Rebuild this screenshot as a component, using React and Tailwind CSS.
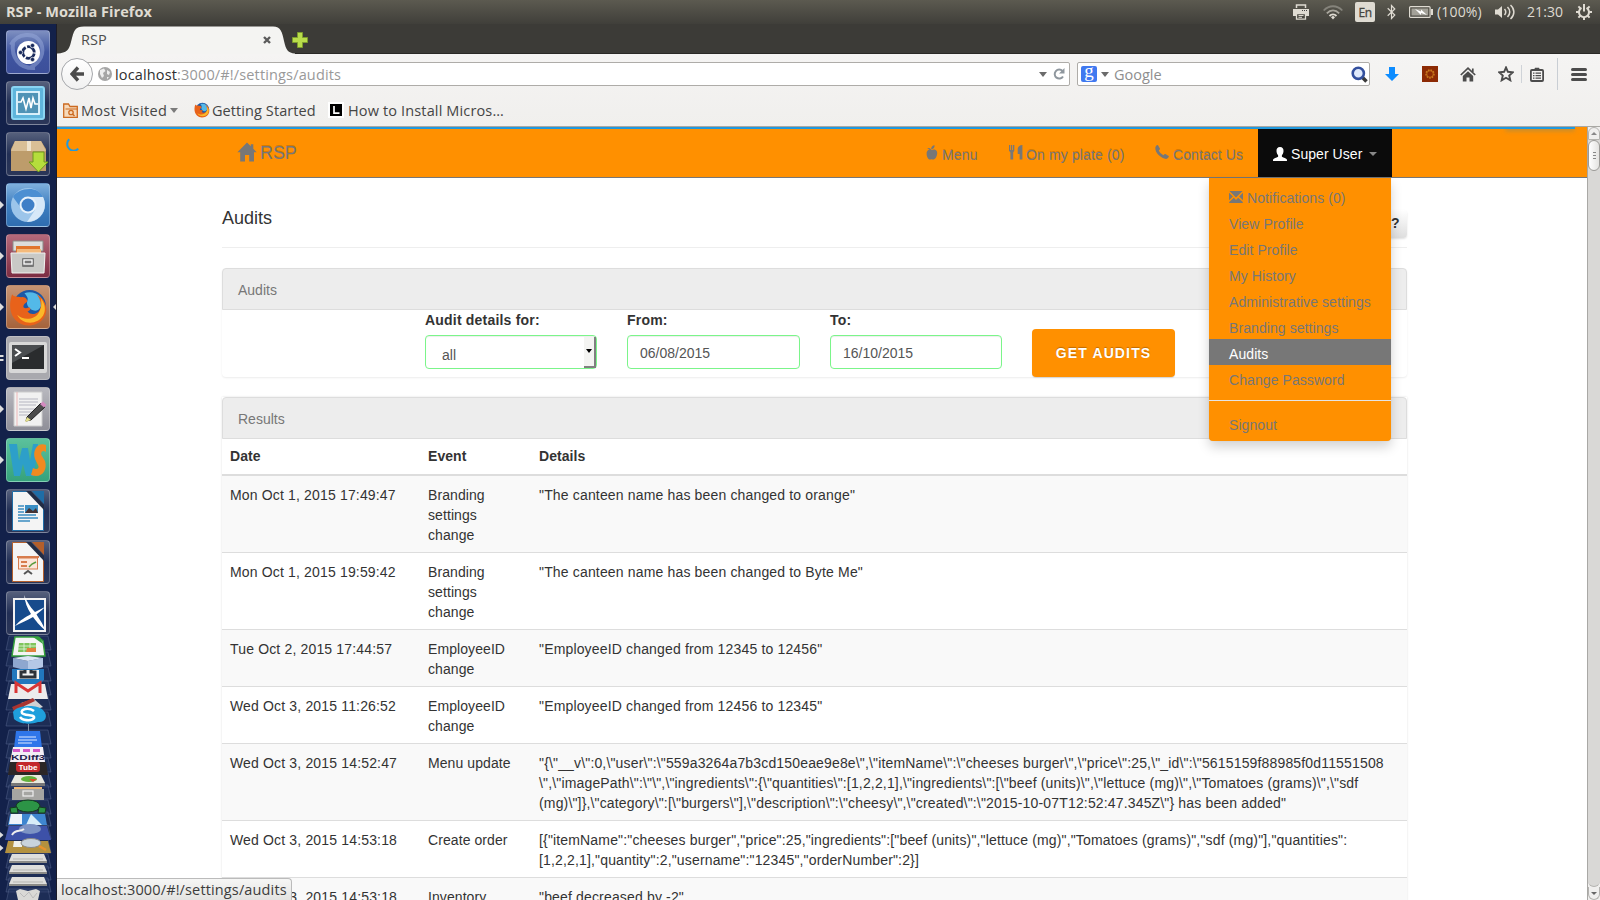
import React from "react";

const page = "font-['Liberation_Sans',Arial,sans-serif]";
const chrome = "font-['Open_Sans','Noto_Sans',sans-serif]";

/* ---------- page glyphs ---------- */
const HomeGlyph = () => (
  <svg width="20" height="20" viewBox="0 0 20 20" fill="#777"><path d="M10 .4 13.800 4.200V2.200H16.300V6.700L19.700 10.200H17V19.400H12.200V13H8V19.400H3.200V10.200H.4Z" /></svg>
);
const AppleGlyph = () => (
  <svg width="12" height="15" viewBox="0 0 12 15" fill="#777"><path d="M5.200 4.200C5 1.800 6.400.4 8.600.2 8.800 2.300 7.500 3.800 5.800 4.300ZM1.200 3.100C2.800 2.800 4.600 3.200 5.300 4.900 6.200 4.700 7 4.300 8.400 4.400 10.600 4.600 11.400 6.500 11.200 8.600 11 11.300 9.400 14.400 7.600 14.500 6.900 14.500 6.500 14.200 5.700 14.200 4.900 14.200 4.600 14.500 3.900 14.500 2.100 14.300.7 11.500.6 8.900.5 6.600 1.500 4.800 3.500 4.500 2.500 4.100 1.700 3.800 1.200 3.100Z" /></svg>
);
const CutleryGlyph = () => (
  <svg width="14" height="15" viewBox="0 0 14 15" fill="#777"><path d="M0 0H1.200V5H2V0H3.200V5H4V0H5.300V5.800L4.200 7.400V14.600H1.400V7.400L0 5.800ZM13.400 0V14.600H10.600V9H8.700V4C8.700 1.600 10.800.2 13.400 0Z" /></svg>
);
const PhoneGlyph = () => (
  <svg width="14" height="14" viewBox="0 0 14 14" fill="#777"><path d="M.4 2.200C.7 1.200 1.600.3 2.400.1 2.900 0 3.100.3 3.300.7L4.900 3.600C5.100 4 5 4.300 4.700 4.600L3.800 5.500C4.700 7.400 6.500 9.200 8.500 10.200L9.400 9.300C9.700 9 10 8.900 10.400 9.100L13.300 10.700C13.800 11 14 11.300 13.800 11.800 13.300 13 12.200 13.900 11 13.900 6 13.400-.6 7.500.4 2.200Z" /></svg>
);
const UserGlyph = () => (
  <svg width="14" height="14" viewBox="0 0 14 14" fill="#fff"><path d="M7 0C9.500 0 10.700 1.700 10.500 4.200 10.400 6 9.600 7.500 8.900 8.300V9.700C10.800 10.700 13.300 11.300 13.800 12.300 14 12.900 14 13.600 14 14H0C0 13.600 0 12.900.2 12.300.7 11.300 3.200 10.700 5.100 9.700V8.300C4.400 7.500 3.600 6 3.500 4.200 3.300 1.700 4.500 0 7 0Z" /></svg>
);
const MailGlyph = () => (
  <svg className="-mt-px" width="14" height="12" viewBox="0 0 14 12" fill="#777"><path d="M.4 0H13.600L7 6.400ZM0 1.700 3.900 5.600 0 9.300ZM14 1.700V9.300L10.100 5.600ZM4.800 6.700 7 8.900 9.200 6.700 13.800 11 13.800 12H.2V11Z" /></svg>
);
const Tri = ({ c = "#777" }) => (
  <svg className="block" width="8" height="5" viewBox="0 0 8 5"><path d="M0 0H8L4 5Z" fill={c} /></svg>
);

/* ---------- launcher ---------- */
const Firefox = ({ s }) => (
  <svg width={s} height={s} viewBox="0 0 38 38">
    <circle cx="20" cy="18" r="16" fill="#1d57a5" />
    <path d="M15 5C20 3 27 4 31 9 33 14 32 20 27 22 20 23 16 16 18 12 19 10 17 7 15 5Z" fill="#53b9e8" />
    <path d="M3 6C5 9 8 8 12 9 16 8 18 12 18 13 16 15 14 16 14 18 14 20 17 20 19 19 22 19 21 22 18 23 22 28 31 25 31 17 31 12 29 9 27 6 36 11 39 21 34 29 28 38 14 39 7 32 0 25 0 15 3 6Z" fill="#e8621a" />
    <path d="M31 10C38 19 35 28 28 32 20 36 11 33 8 26 14 32 25 31 29 24 32 19 32 14 31 10Z" fill="#fbb829" />
  </svg>
);

const Tile = ({ bg, left, right, two, children }) => (
  <div className="relative w-[57px] h-11 shrink-0 flex justify-center pr-px">
    <div className={`w-11 h-11 rounded-[4px] border border-white/25 overflow-hidden flex items-center justify-center ${bg}`}>{children}</div>
    {left && <svg className="absolute left-0 top-[18px]" width="4" height="8"><path d="M0 0 4 4 0 8Z" fill="#ddd" /></svg>}
    {two && <svg className="absolute left-0 top-[18px]" width="4" height="8"><path d="M0 1H3.500V3H0ZM0 5H3.500V7H0Z" fill="#ddd" /></svg>}
    {right && <svg className="absolute right-0 top-[18px]" width="4" height="8"><path d="M4 0 0 4 4 8Z" fill="#ddd" /></svg>}
  </div>
);
const dark = "bg-linear-to-b from-[#56607c] via-[#222f55] to-[#2b3658]";

const Doc = ({ c, children }) => (
  <svg width="42" height="42" viewBox="0 0 42 42">
    <path d="M5.500 1.500H22L36.500 17V40.500H5.500Z" fill="#f4f4f4" stroke={c} />
    <path d="M25 1H37V14Z" fill={c} /><path d="M19 1H24L37 15V20Z" fill="#222c44" />
    {children}
  </svg>
);

const tray = (y) => (
  <g key={y}>
    <path d={`M12 ${y}H44L47 ${y + 7}H9Z`} fill="#dededc" />
    <path d={`M9 ${y + 7}H47V${y + 9}H9Z`} fill="#8b8b88" />
    <path d={`M13 ${y + 5}H43`} stroke="#b5b5b2" />
  </g>
);

const Launcher = () => (
  <aside className="w-[57px] h-[876px] shrink-0 overflow-hidden bg-[#13214a] border-r border-[#1c1c28] pt-1.5 flex flex-col gap-[7px]">
    <Tile bg="bg-linear-to-b from-[#7e8fc0] via-[#4055a0] to-[#3c4f9a]">
      <svg width="42" height="42" viewBox="0 0 42 42">
        <g fill="none" stroke="#9aabdc" strokeWidth="4" opacity=".5"><path d="M4 14C10 2 28 0 34 12 38 22 33 32 24 36" /><path d="M6 12C4 26 12 38 28 37" /></g>
        <circle cx="21.500" cy="21.500" r="11.500" fill="#fff" />
        <circle cx="21.500" cy="21.500" r="5.800" fill="none" stroke="#1c2d5e" strokeWidth="2.800" strokeDasharray="10.600 1.500" strokeDashoffset="-1" />
        <g fill="#1c2d5e" stroke="#fff" strokeWidth=".7"><circle cx="13.500" cy="21.500" r="2.200" /><circle cx="25.500" cy="14.500" r="2.200" /><circle cx="25.500" cy="28.500" r="2.200" /></g>
      </svg>
    </Tile>
    <Tile bg={dark}>
      <svg width="34" height="34" viewBox="0 0 34 34"><rect x="1" y="1" width="32" height="32" rx="2" fill="#5fb5dc" stroke="#8ad4f2" strokeWidth="2" /><rect x="6" y="6" width="22" height="22" fill="#4f93b6" stroke="#e6f8ff" strokeWidth="1.800" /><path d="M7 16H10L12 12 15 23 18 12 20 22 22 12 24 18H27" fill="none" stroke="#fff" strokeWidth="1.600" /></svg>
    </Tile>
    <Tile bg={dark}>
      <svg width="42" height="42" viewBox="0 0 42 42"><path d="M8 8H34L39 16V38H4V16Z" fill="#bd9c6b" /><path d="M8 8H34L39 18H4Z" fill="#d9bf96" /><path d="M20 8H24V18H20Z" fill="#efe3cd" /><path d="M26 19H37V29H41L31.500 39 22 29H26Z" fill="#b5dd3c" stroke="#6f9a1d" /></svg>
    </Tile>
    <Tile left bg="bg-linear-to-b from-[#7fb0dd] via-[#3f7fc0] to-[#2f6db0]">
      <svg width="38" height="38" viewBox="0 0 38 38"><circle cx="19" cy="19" r="17" fill="#9cc5ea" /><path d="M4 11C8 3 28-2 34 11H19C12 12 11 17 12 22Z" fill="#4c8fd2" /><path d="M19 11H34C40 23 31 36 18 36L26 24Z" fill="#d7e8f8" /><circle cx="19" cy="19" r="8.500" fill="#e8f2fb" /><circle cx="19" cy="19" r="6.500" fill="#3f7fc7" /></svg>
    </Tile>
    <Tile left bg="bg-linear-to-b from-[#b5697b] to-[#7c2c42]">
      <svg width="38" height="38" viewBox="0 0 38 38"><path d="M4 4H34V14H4Z" fill="#dcdcda" stroke="#8b8b88" /><path d="M7 9H31V16H7Z" fill="#e0752c" /><path d="M8 12H32V17H8Z" fill="#f4ba7b" /><path d="M2 16H36L35 36H3Z" fill="#c9c9c6" stroke="#f2f2f0" /><rect x="13" y="21" width="12" height="9" rx="1" fill="#777" /><rect x="15" y="23" width="8" height="4" fill="#777" stroke="#fff" strokeWidth="1.300" /></svg>
    </Tile>
    <Tile left right bg="bg-linear-to-b from-[#c79473] to-[#a5633b]"><Firefox s={39} /></Tile>
    <Tile two bg="bg-[#a9a9ae]">
      <svg width="40" height="34" viewBox="0 0 40 34"><rect x="1" y="1" width="38" height="31" rx="2" fill="#d8d8d8" /><rect x="4" y="4" width="32" height="24" fill="#2a2c2e" /><path d="M4 4H36L4 22Z" fill="#4a4d50" /><path d="M7 8 12 11.500 7 15M14 17H21" fill="none" stroke="#fff" strokeWidth="2" /></svg>
    </Tile>
    <Tile left bg="bg-linear-to-b from-[#b9b9bf] to-[#8f8f98]">
      <svg width="38" height="38" viewBox="0 0 38 38"><path d="M5 2H33V36H5Z" fill="#f1f1f1" stroke="#ccc" /><path d="M8 2V36" stroke="#eaa" strokeWidth=".8" /><path d="M10 9H29M10 12H29M10 15H27M10 19H29M10 22H24M10 25H22" stroke="#b5b5c0" strokeWidth="1" /><path d="M18 27 32 13 36 17 22 30 17 31Z" fill="#4b4b4b" stroke="#222" /><path d="M18 27 22 30 16 32Z" fill="#e5e08a" /><path d="M31 14 34 11.500 37.500 15 35 17.500Z" fill="#d48bc0" /></svg>
    </Tile>
    <Tile left bg="bg-linear-to-b from-[#5bc19c] to-[#35a27c]">
      <svg width="42" height="42" viewBox="0 0 42 42"><path d="M2 5H10L12 22 15 9H21L23 22 26 5H31L27 37H19L16 25 13 37H7Z" fill="#2d9fc9" /><path d="M39 6V13C35 10 33 14 35 17L38 22C41 32 34 40 24 36L26 29C29 31 33 30 31 26L28 20C25 11 31 3 39 6Z" fill="#f08a20" /></svg>
    </Tile>
    <Tile bg={dark}><Doc c="#1f6da6"><path d="M11 16H17M11 19H17M11 22H17M11 25H29M11 28H31M11 31H23" stroke="#3a8cc0" strokeWidth="1.500" /><rect x="18" y="15" width="13" height="8" fill="#3a8fc5" /><path d="M18 23 22 18 26 21 29 18 31 23Z" fill="#433" /></Doc></Tile>
    <Tile bg={dark}><Doc c="#b45f2b"><rect x="11.500" y="17" width="19" height="11" fill="#fbe6da" stroke="#d77c4d" /><path d="M10 16H32" stroke="#d77c4d" strokeWidth="2" /><path d="M14 21H20M14 25H20" stroke="#d77c4d" strokeWidth="2" /><path d="M22 26 25 23 29 21" stroke="#5a9b3c" strokeWidth="1.500" fill="none" /><path d="M17 33 21 30 25 33" stroke="#555" strokeWidth="2" fill="none" /></Doc></Tile>
    <Tile bg={dark}>
      <svg width="42" height="42" viewBox="0 0 42 42"><rect x="7" y="7" width="31" height="32" fill="#174b8c" stroke="#f2f2f2" strokeWidth="2" /><path d="M17 3C21 12 25 17 28 20L38 15C34 19 31 21 29.500 22.500 33 28 36 32 38 38 32 33 29 29 26 25 19 29 13 31 8 34 13 28 19 25 24 22 20 16 18 10 17 3Z" fill="#fff" /></svg>
    </Tile>
    <svg className="-mt-[7px] shrink-0" width="57" height="265" viewBox="0 635 57 265">
      {[636, 652, 667, 681, 696, 712, 730, 744, 758, 773, 785, 800, 812, 825, 839, 854, 866, 878, 889].map((y) => (
        <path key={y} d={`M9 ${y}H48L51 ${y + 14}H6Z`} fill="#2b3b66" fillOpacity=".45" stroke="#56658d" strokeWidth=".5" />
      ))}
      <path d="M15 637H38L43 641 45 656H12Z" fill="#f4f4f4" stroke="#35a03c" strokeWidth="1.500" /><path d="M33 637H40L43 644Z" fill="#35a03c" /><path d="M19 643H36V652H18Z" fill="#7fc45c" /><path d="M18 646H36M18 649H36M24 643V652M30 643V652" stroke="#e9f7e3" strokeWidth=".8" /><path d="M27 648H36V652H26Z" fill="#e2803c" />
      <path d="M13 658 28 661 43 658V667L28 671 13 667Z" fill="#8ea7cf" /><path d="M13 658 28 656 43 658 28 661Z" fill="#dce6f5" /><path d="M28 661 43 658V667L28 671Z" fill="#b4c8e6" />
      <path d="M12 669H44V680L40 684H16L12 680Z" fill="#2177bd" /><path d="M17 670H39V679H17Z" fill="#f2f2f2" /><path d="M25 670V672H21V677H35V672H31V670" fill="none" stroke="#2f3238" strokeWidth="3" />
      <path d="M11 684H45L48 699H8Z" fill="#ececec" /><path d="M16 693V683L28 691 40 683V693" fill="none" stroke="#d93636" strokeWidth="3" />
      <path d="M21 703 34 699 43 707 28 712Z" fill="#cfd0d2" /><path d="M12 707 33 698 35 701 14 711Z" fill="#a93430" />
      <path d="M13 712C17 705 37 704 43 710 49 716 45 723 38 722 30 725 19 724 14 719Z" fill="#1f9fdc" /><path d="M34 711C29 707 20 709 22 713 24 716 35 714 34 718 31 722 22 720 20 717" fill="none" stroke="#fff" strokeWidth="2.600" />
      <path d="M28.500 724V735" stroke="#9ab" strokeWidth=".8" />
      <path d="M16 731H40L42 748H14Z" fill="#2f76ea" /><path d="M19 737H36M18 740H37M18 743H32" stroke="#dfeaff" strokeWidth="1.200" />
      <path d="M13 747H43L45 762H10Z" fill="#f3eef5" /><path d="M13 749H20V752H13ZM23 749H30V752H23ZM33 749H40V752H33Z" fill="#d357c5" />
      <text x="11" y="760" fontSize="8" fontWeight="bold" fontFamily="Liberation Sans" fill="#1f1d4b" textLength="34" lengthAdjust="spacingAndGlyphs">KDiff3</text>
      <path d="M10 762H46L48 775H8Z" fill="#2b2626" /><rect x="16" y="762" width="24" height="10" rx="3" fill="#c3272b" /><text x="18.500" y="770" fontSize="8" fontWeight="bold" fontFamily="Liberation Sans" fill="#fff" textLength="19" lengthAdjust="spacingAndGlyphs">Tube</text>
      <path d="M15 775H41L45 783H11Z" fill="#e8e8de" /><path d="M11 783H45V786H11Z" fill="#777" /><ellipse cx="29" cy="779" rx="8" ry="3" fill="#62b03b" /><path d="M29 779H37L33 782Z" fill="#e14a2e" />
      <path d="M14 787H42V790H14Z" fill="#efb978" /><path d="M12 789H44V800H12Z" fill="#a5a5a2" /><rect x="23" y="791" width="10" height="5" fill="none" stroke="#eee" strokeWidth="1.200" />
      <ellipse cx="28" cy="806" rx="12" ry="6" fill="#2c9446" stroke="#143b1e" /><path d="M10 808 17 807 18 813 11 813ZM39 807 46 808 45 813 38 813Z" fill="#2c9446" stroke="#143b1e" />
      <path d="M10 814H45L47 825H8Z" fill="#3f86d0" /><path d="M11 814H22V824H9Z" fill="#eef3fa" /><path d="M31 814 36 819 42 825H26Z" fill="#d7edf8" />
      <path d="M9 826H47L51 840H5Z" fill="#3d51a8" /><ellipse cx="30" cy="829" rx="11" ry="5" fill="#7d93c4" /><path d="M12 835C15 829 20 832 24 829" stroke="#eee" strokeWidth="2" fill="none" />
      <path d="M8 841H48L51 853H5Z" fill="#b3913f" /><path d="M14 841H22V847H13Z" fill="#f0f0e8" /><ellipse cx="31" cy="843" rx="10" ry="4.500" fill="#c9d3dc" stroke="#888" /><path d="M39 846 46 850" stroke="#e8922c" strokeWidth="2.500" />
      {[854, 865, 877].map(tray)}
      <path d="M16 891 20 889 28 891 36 889 40 891 38 900H18Z" fill="#d9d9d6" /><path d="M20 893 24 897 29 892 33 898 37 893" stroke="#bbb" fill="none" />
      <path d="M0 832 3.500 835 0 838ZM0 845 3.500 848 0 851Z" fill="#ddd" />
    </svg>
  </aside>
);

/* ---------- system bar ---------- */
const SystemBar = () => (
  <header className={`h-6 flex items-center bg-linear-to-b from-[#5c5a50] to-[#403f3a] text-[#dfdbd2] ${chrome} whitespace-nowrap`}>
    <div className="ml-1.5 w-[1287px] text-[14.500px] font-bold tracking-[0.050px]">RSP - Mozilla Firefox</div>
    <svg width="16" height="16" viewBox="0 0 16 16"><path d="M3.500 4V1H12.500V4" fill="none" stroke="#dfdbd2" strokeWidth="1.500" /><path d="M0 5H16V12H13V9H3V12H0Z" fill="#dfdbd2" /><path d="M3.500 9.500H12.500V15.200H3.500Z" fill="none" stroke="#dfdbd2" strokeWidth="1.300" /><path d="M5.500 11.500H10.500M5.500 13.300H9" stroke="#dfdbd2" /><path d="M9 6.500H14" stroke="#444" strokeDasharray="1 1" /></svg>
    <svg className="ml-3.5" width="20" height="15" viewBox="0 0 20 15" fill="none" strokeWidth="1.800"><path d="M.7 5.500C6-.2 14-.2 19.300 5.500" stroke="#85837b" /><path d="M3.800 8.300C7.500 4.500 12.500 4.500 16.200 8.300" stroke="#a9a69d" /><path d="M6.500 11C8.500 9 11.500 9 13.500 11" stroke="#dfdbd2" /><path d="M8 12.300 10 10.800 12 12.300 10 14.500Z" fill="#dfdbd2" /></svg>
    <div className="ml-3 w-5 h-5 rounded-[2px] bg-[#dfdbd2] text-[#45443f] text-[12px] leading-[21px] text-center tracking-[-0.5px] [-webkit-text-stroke:0.3px]">En</div>
    <svg className="ml-3" width="9" height="16" viewBox="0 0 9 16"><path d="M.7 4.300 7.800 11 4.500 14.500V1.500L7.800 5 .7 11.700" fill="none" stroke="#dfdbd2" strokeWidth="1.200" /></svg>
    <svg className="ml-[13px]" width="24" height="12" viewBox="0 0 24 12"><rect x=".6" y=".6" width="20.500" height="10.800" rx="1" fill="none" stroke="#dfdbd2" strokeWidth="1.200" /><rect x="2.500" y="2.500" width="16.700" height="7" fill="#a3a198" /><path d="M22 3H24V9H22" fill="#dfdbd2" /><path d="M6 3 12 5.500V3.500L18 9 12 7V9Z" fill="#fff" /></svg>
    <div className="ml-1 -mt-0.5 w-[45px] text-[14px] tracking-[0.180px]">(100%)</div>
    <svg className="ml-[13px]" width="20" height="16" viewBox="0 0 20 16"><path d="M0 5.500H3L7 2V14L3 10.500H0Z" fill="#dfdbd2" /><path d="M9.500 5C11.200 7 11.200 9 9.500 11M12.500 3C15.500 6 15.500 10 12.500 13M15.500 1C20 5 20 11 15.500 15" fill="none" stroke="#dfdbd2" strokeWidth="1.500" /></svg>
    <div className="ml-3 -mt-0.5 w-9 text-[14px] tracking-[0.100px]">21:30</div>
    <svg className="ml-[13px]" width="16" height="16" viewBox="0 0 16 16" fill="none" stroke="#dfdbd2"><path d="M5.500 3.800A5 5 0 1 0 10.500 3.800" strokeWidth="2" /><path d="M8 0V7.500" strokeWidth="2" /><path d="M0 8H3M13 8H16M8 13V16M2.400 2.400 4.500 4.500M13.600 2.400 11.500 4.500M2.400 13.600 4.500 11.500M13.600 13.600 11.500 11.500" strokeWidth="2" /></svg>
  </header>
);

/* ---------- browser chrome ---------- */
const TabStrip = () => (
  <div className="h-[30px] bg-[#3c3b37] border-b border-[#2a2926] flex">
    <div className="relative w-[238px] h-[30px] -mb-px shrink-0">
      <svg className="absolute inset-0" width="238" height="30" viewBox="0 0 238 30"><path d="M0 29.500C10 29 12 26 14 18 17 6 18 2.500 27 2.500H216C224 2.500 225 8 227 17 229 26 231 29 238 29.500V30H0Z" fill="#f4f4f2" /></svg>
      <div className="relative flex items-center h-[30px] pl-6 pt-0.5">
        <div className={`w-[180px] text-[14.500px] leading-5 text-[#4c4c4c] ${chrome}`}>RSP</div>
        <svg className="ml-[2px]" width="8" height="8" viewBox="0 0 8 8"><path d="M1 1 7 7M7 1 1 7" stroke="#5b5b5b" strokeWidth="2.400" /></svg>
      </div>
    </div>
    <svg className="mt-2 -ml-[3px]" width="16" height="16" viewBox="0 0 16 16"><path d="M5.500.5H10.500V5.500H15.500V10.500H10.500V15.500H5.500V10.500H.5V5.500H5.500Z" fill="#b9dc4b" stroke="#7d9c2d" /></svg>
  </div>
);

const NavBar = () => (
  <div className="h-10 flex items-center pl-1">
    <div className="relative z-10 w-8 h-8 shrink-0 rounded-full border border-[#a5a7ab] bg-linear-to-b from-white to-[#f0f0f0] flex items-center justify-center">
      <svg width="14" height="16" viewBox="0 0 14 16"><path d="M8 1.500 2 8 8 14.500M2.500 8H14" fill="none" stroke="#4c4c4c" strokeWidth="3.400" /></svg>
    </div>
    <div className="-ml-3 w-[989px] h-6 shrink-0 bg-white border border-[#aeaca8] rounded-[2px] flex items-center pl-4">
      <svg width="14" height="14" viewBox="0 0 14 14"><circle cx="7" cy="7" r="7" fill="#a6a6a6" /><path d="M2 3 6 1.500 7.500 4 5 6 6 9 4 11 2 7ZM9 3 12 5 11 8 9 7ZM9 10 11 10 9 12.500Z" fill="#eee" /></svg>
      <div className={`ml-[3px] pt-px w-[924px] text-[14.500px] leading-5 tracking-[0.150px] text-[#999] whitespace-nowrap ${chrome}`}><span className="text-[#2f2f2f]">localhost</span>:3000/#!/settings/audits</div>
      <Tri c="#6b6b6b" />
      <svg className="ml-1.5" width="12" height="12" viewBox="0 0 12 12"><path d="M9.500 3A4.500 4.500 0 1 0 10 8.500" fill="none" stroke="#8f979e" strokeWidth="2" /><path d="M11.500 0V5.500H6Z" fill="#8f979e" /></svg>
    </div>
    <div className="ml-[7px] w-[293px] h-6 shrink-0 bg-white border border-[#aeaca8] rounded-[2px] flex items-center pl-[3px]">
      <div className="w-4 h-4 rounded-[2px] bg-[#4079f0] text-white text-[19px] leading-[10px] text-center font-['Liberation_Serif',serif]">g</div>
      <div className="ml-1"><Tri c="#6b6b6b" /></div>
      <div className={`ml-[5px] pt-px w-[237px] text-[14.500px] leading-5 text-[#8e8e8e] ${chrome}`}>Google</div>
      <svg width="17" height="17" viewBox="0 0 17 17"><path d="M11 11 15.500 15.500" stroke="#3a3a3a" strokeWidth="3.500" /><circle cx="7.300" cy="7.300" r="5.600" fill="#dfe9fb" stroke="#33509e" strokeWidth="2.600" /></svg>
    </div>
    <svg className="ml-[15px]" width="14" height="14" viewBox="0 0 14 14"><path d="M4 0H10V7H14L7 14 0 7H4Z" fill="#0d8cff" /></svg>
    <div className="ml-[23px] w-4 h-4 bg-[#8c2a04] flex items-center justify-center">
      <svg width="12" height="12" viewBox="0 0 12 12"><circle cx="6" cy="6" r="4" fill="none" stroke="#c97a1e" strokeWidth="1.400" strokeDasharray="1.600 1.100" /><circle cx="6" cy="6" r="3.300" fill="none" stroke="#c97a1e" strokeWidth=".8" /></svg>
    </div>
    <svg className="ml-[22px]" width="16" height="15" viewBox="0 0 16 15"><path d="M.8 8 8 1.200 15.200 8M12.800 1.500V5" fill="none" stroke="#4c4c4c" strokeWidth="1.700" /><path d="M8 4.300 13.200 9V14.500H9.500V10.500H6.500V14.500H2.800V9Z" fill="#4c4c4c" /></svg>
    <svg className="ml-[22px]" width="16" height="16" viewBox="0 0 16 16"><path d="M8 1.500 9.900 5.800 14.800 6.300 11.200 9.500 12.300 14.300 8 11.800 3.700 14.300 4.800 9.500 1.200 6.300 6.100 5.800Z" fill="none" stroke="#4c4c4c" strokeWidth="1.900" /></svg>
    <div className="ml-[7px] w-px h-[18px] bg-[#cfd3d8]" />
    <svg className="ml-2" width="14" height="15" viewBox="0 0 14 15"><rect x=".9" y="3" width="12.200" height="11" rx="1" fill="none" stroke="#4c4c4c" strokeWidth="1.800" /><path d="M4 3 5 .8H9L10 3Z" fill="#4c4c4c" /><path d="M3 6.200H4.500M3 8.700H4.500M3 11.200H4.500M5.500 6.200H11M5.500 8.700H11M5.500 11.200H11" stroke="#4c4c4c" strokeWidth="1.300" /></svg>
    <div className="ml-[13px] w-px h-8 bg-[#c9ced4]" />
    <div className="ml-[13px] flex flex-col gap-0.5"><i className="w-4 h-[3px] rounded-full bg-[#4c4c4c]" /><i className="w-4 h-[3px] rounded-full bg-[#4c4c4c]" /><i className="w-4 h-[3px] rounded-full bg-[#4c4c4c]" /></div>
  </div>
);

const Bookmarks = () => (
  <div className={`h-8 flex items-center pl-1.5 text-[14.500px] leading-5 text-[#454545] whitespace-nowrap ${chrome}`}>
    <svg width="15" height="15" viewBox="0 0 15 15"><path d="M.7 1H5.500L7 3.500H14.300V14.300H.7Z" fill="#f6d9ba" stroke="#cc6a21" strokeWidth="1.300" /><path d="M2.500 6H14" stroke="#cc6a21" /><circle cx="8" cy="9.500" r="2.200" fill="none" stroke="#cc6a21" strokeWidth="1.300" /><path d="M9.500 11 11.500 13" stroke="#cc6a21" strokeWidth="1.500" /></svg>
    <div className="ml-[3px] pt-0.5 w-[86px] tracking-[0.280px]">Most Visited</div>
    <div className="ml-[3px]"><Tri c="#7b7b7b" /></div>
    <div className="ml-4"><Firefox s={16} /></div>
    <div className="ml-0.5 pt-0.5 w-[104px] tracking-[0.080px]">Getting Started</div>
    <div className="ml-3 w-4 h-4 bg-white flex items-center justify-center"><svg width="12" height="12" viewBox="0 0 12 12"><path d="M0 0H12V12H0Z" fill="#000" /><path d="M4 2V9.200H9.500" fill="none" stroke="#fff" strokeWidth="1.700" /></svg></div>
    <div className="ml-1 pt-0.5 tracking-[0.140px]">How to Install Micros…</div>
  </div>
);

/* ---------- page ---------- */
const menu = ["View Profile", "Edit Profile", "My History", "Administrative settings", "Branding settings", "Audits", "Change Password"];

const UserMenu = () => (
  <div className="absolute z-20 top-[51px] right-px w-[182px] h-[263px] rounded-b-[4px] bg-[#ff9000] py-[5px] shadow-[0_6px_12px_rgba(0,0,0,0.175),0_0_1px_rgba(0,0,0,0.15)] text-[#777] text-[14px] leading-5 tracking-[0.080px]">
    <div className="h-[26px] px-5 pt-[3px] flex items-center gap-1"><MailGlyph />Notifications (0)</div>
    {menu.map((m) => (
      <div key={m} className={`h-[26px] px-5 pt-[5px] ${m === "Audits" ? "bg-[#777] text-white" : ""}`}>{m}</div>
    ))}
    <div className="my-[9px] h-px bg-[#e5e5e5]" />
    <div className="h-[26px] px-5 pt-[5px]">Signout</div>
  </div>
);

const SiteNav = () => (
  <nav className="h-[51px] bg-[#ff9000] border-b border-[#777] pl-[180px] text-[#777] text-[14px] leading-5">
    <div className="relative w-[1155px] h-[50px] flex items-start [text-shadow:0_-1px_0_rgba(0,0,0,0.18)]">
      <div className="flex items-start gap-[3px] pt-[15px] w-[689px] text-[18px] leading-5 tracking-[-0.100px]"><HomeGlyph /><span className="pt-px">RSP</span></div>
      <div className="flex items-start pt-[18px] gap-1 w-[83px] tracking-[0.150px]"><AppleGlyph /><span>Menu</span></div>
      <div className="flex items-start pt-[18px] gap-[3px] w-[146px] tracking-[0.130px]"><CutleryGlyph /><span>On my plate (0)</span></div>
      <div className="flex items-start pt-[18px] gap-1 w-[103px] tracking-[0.080px]"><PhoneGlyph /><span>Contact Us</span></div>
      <div className="flex items-center gap-1 w-[134px] h-[50px] pl-[15px] pt-[3px] bg-[#0b0b0b] text-white tracking-[0.060px]"><UserGlyph /><span className="pt-px">Super User</span>
        <svg className="ml-[3px]" width="8" height="4" viewBox="0 0 8 4"><path d="M0 0H8L4 4Z" fill="#888" /></svg>
      </div>
      <div className="[text-shadow:none]"><UserMenu /></div>
    </div>
  </nav>
);

const Heading = ({ children }) => (
  <div className="h-[42px] rounded-t-[4px] border border-[#ddd] bg-[#ededed] px-[15px] pt-[11px] text-[14px] leading-5 text-[#777]">{children}</div>
);
const field = "h-[34px] border border-[#7bf58a] rounded-[4px] bg-white text-[#555] text-[14px] shadow-[inset_0_1px_1px_rgba(0,0,0,0.075)]";
const label = "font-bold leading-5 h-[25px] tracking-[0.200px]";

const rows = [
  ["Mon Oct 1, 2015 17:49:47", ["Branding", "settings", "change"], ['"The canteen name has been changed to orange"']],
  ["Mon Oct 1, 2015 19:59:42", ["Branding", "settings", "change"], ['"The canteen name has been changed to Byte Me"']],
  ["Tue Oct 2, 2015 17:44:57", ["EmployeeID", "change"], ['"EmployeeID changed from 12345 to 12456"']],
  ["Wed Oct 3, 2015 11:26:52", ["EmployeeID", "change"], ['"EmployeeID changed from 12456 to 12345"']],
  ["Wed Oct 3, 2015 14:52:47", ["Menu update"], [
    '"{\\"__v\\":0,\\"user\\":\\"559a3264a7b3cd150eae9e8e\\",\\"itemName\\":\\"cheeses burger\\",\\"price\\":25,\\"_id\\":\\"5615159f88985f0d11551508',
    '\\",\\"imagePath\\":\\"\\",\\"ingredients\\":{\\"quantities\\":[1,2,2,1],\\"ingredients\\":[\\"beef (units)\\",\\"lettuce (mg)\\",\\"Tomatoes (grams)\\",\\"sdf',
    '(mg)\\"]},\\"category\\":[\\"burgers\\"],\\"description\\":\\"cheesy\\",\\"created\\":\\"2015-10-07T12:52:47.345Z\\"} has been added"']],
  ["Wed Oct 3, 2015 14:53:18", ["Create order"], [
    '[{"itemName":"cheeses burger","price":25,"ingredients":["beef (units)","lettuce (mg)","Tomatoes (grams)","sdf (mg)"],"quantities":',
    '[1,2,2,1],"quantity":2,"username":"12345","orderNumber":2}]']],
  ["Wed Oct 3, 2015 14:53:18", ["Inventory", "update"], ['"beef decreased by -2"']],
];
const Lines = ({ t }) => t.map((l, i) => <div key={i} className="whitespace-nowrap">{l}</div>);

const Page = () => (
  <div className={`relative w-[1530px] h-[773px] overflow-hidden bg-white text-[#333] ${page}`}>
    <SiteNav />
    <main className="ml-[165px] w-[1185px]">
      <div className="h-[70px] border-b border-[#eee] flex justify-between items-start">
        <h1 className="pt-[30px] text-[18px] leading-5">Audits</h1>
        <div className="mt-8 w-9 h-7 rounded-[4px] bg-linear-to-b from-white to-[#dedede] shadow-[0_1px_2px_rgba(0,0,0,0.12)] pl-5 font-bold text-[14px] leading-[26px]">?</div>
      </div>
      <section className="mt-5 h-[109px] rounded-[4px] shadow-[0_1px_2px_rgba(0,0,0,0.08)]">
        <Heading>Audits</Heading>
        <div className="flex pl-[203px] text-[14px]">
          <div className="w-[172px]">
            <div className={label}>Audit details for:</div>
            <div className={`${field} flex items-center justify-between pl-4`}><span className="pt-1.5">all</span>
              <div className="w-3 h-[31px] bg-[#f4f4f2] border-r-2 border-b-2 border-[#808080] flex items-center justify-center"><svg width="6" height="4"><path d="M0 0H6L3 4Z" fill="#000" /></svg></div>
            </div>
          </div>
          <div className="ml-[30px] w-[173px]">
            <div className={label}>From:</div>
            <div className={`${field} px-3 leading-[35px]`}>06/08/2015</div>
          </div>
          <div className="ml-[30px] w-[172px]">
            <div className={label}>To:</div>
            <div className={`${field} px-3 leading-[35px]`}>16/10/2015</div>
          </div>
          <div className="ml-[30px] mt-[19px] w-[143px] h-12 rounded-[4px] bg-[#ff9000] text-white font-bold text-center leading-[49px] tracking-[1.130px] [text-shadow:0_-1px_1px_rgba(0,0,0,0.25)] shadow-[0_1px_1px_rgba(0,0,0,0.12)]">GET AUDITS</div>
        </div>
      </section>
      <section className="mt-5 shadow-[0_0_2px_rgba(0,0,0,0.12)]">
        <Heading>Results</Heading>
        <div className="h-[37px] border-b-2 border-[#ddd] flex pt-[7px] px-2 font-bold text-[14px] leading-5 tracking-[0.060px]">
          <div className="w-[198px]">Date</div><div className="w-[111px]">Event</div><div>Details</div>
        </div>
        {rows.map(([d, e, t], i) => (
          <div key={i} className={`flex px-2 pt-[9px] pb-[7px] text-[14px] leading-5 tracking-[0.160px] ${i ? "border-t border-[#ddd]" : ""} ${i % 2 ? "" : "bg-[#f9f9f9]"}`}>
            <div className="w-[198px] shrink-0">{d}</div>
            <div className="w-[111px] shrink-0 tracking-[0.080px]"><Lines t={e} /></div>
            <div><Lines t={t} /></div>
          </div>
        ))}
      </section>
    </main>
    <div className="absolute z-30 top-0 left-0 w-[1518px] h-0.5 bg-[#2299dd]" />
    <div className="absolute top-0 left-[1448px] w-[70px] h-1 bg-[#7a8a6b]/50 blur-[2px] rounded-full" />
    <svg className="absolute left-[9px] top-[10px]" width="14" height="14" viewBox="0 0 14 14"><path d="M3.200 2.300A6 6 0 0 0 12.300 11.800" fill="none" stroke="#2299dd" strokeWidth="2" /></svg>
    <div className={`absolute z-30 left-0 bottom-0 w-[235px] h-[22px] rounded-tr-[4px] border-t border-r border-[#bbb] bg-linear-to-b from-[#f6f6f5] to-[#e3e3e1] pl-1 text-[14.500px] leading-[21px] tracking-[0.140px] text-[#3c3c3c] whitespace-nowrap ${chrome}`}>localhost:3000/#!/settings/audits</div>
  </div>
);

const Scrollbar = () => (
  <div className="w-[13px] h-[773px] bg-[#f0efee] border-l border-[#a9a8a5] flex flex-col">
    <div className="h-[13px] shrink-0 rounded-t-full border border-[#b4b3b0] bg-[#f0efee] flex items-center justify-center"><svg width="6" height="3"><path d="M0 3H6L3 0Z" fill="#888" /></svg></div>
    <div className="grow rounded-b-[6px] border-b border-[#b4b3b0] bg-[#d9d8d6]">
      <div className="h-[31px] rounded-full border border-[#9b9a97] bg-linear-to-r from-white to-[#e4e3e1] flex flex-col items-center justify-center gap-0.5"><i className="w-[3px] h-px bg-[#888]" /><i className="w-[3px] h-px bg-[#888]" /><i className="w-[3px] h-px bg-[#888]" /></div>
    </div>
    <div className="h-[13px] shrink-0 rounded-b-full border border-t-0 border-[#b4b3b0] bg-[#f0efee] flex items-center justify-center"><svg width="6" height="3"><path d="M0 0H6L3 3Z" fill="#666" /></svg></div>
  </div>
);

export default function App() {
  return (
    <div className="w-[1600px] h-[900px] overflow-hidden bg-white">
      <SystemBar />
      <div className="flex">
        <Launcher />
        <div className="w-[1543px]">
          <TabStrip />
          <div className="h-[73px] bg-linear-to-b from-[#f5f4f3] to-[#f0efed] border-b border-[#a9a8a4]">
            <NavBar />
            <Bookmarks />
          </div>
          <div className="flex"><Page /><Scrollbar /></div>
        </div>
      </div>
    </div>
  );
}
